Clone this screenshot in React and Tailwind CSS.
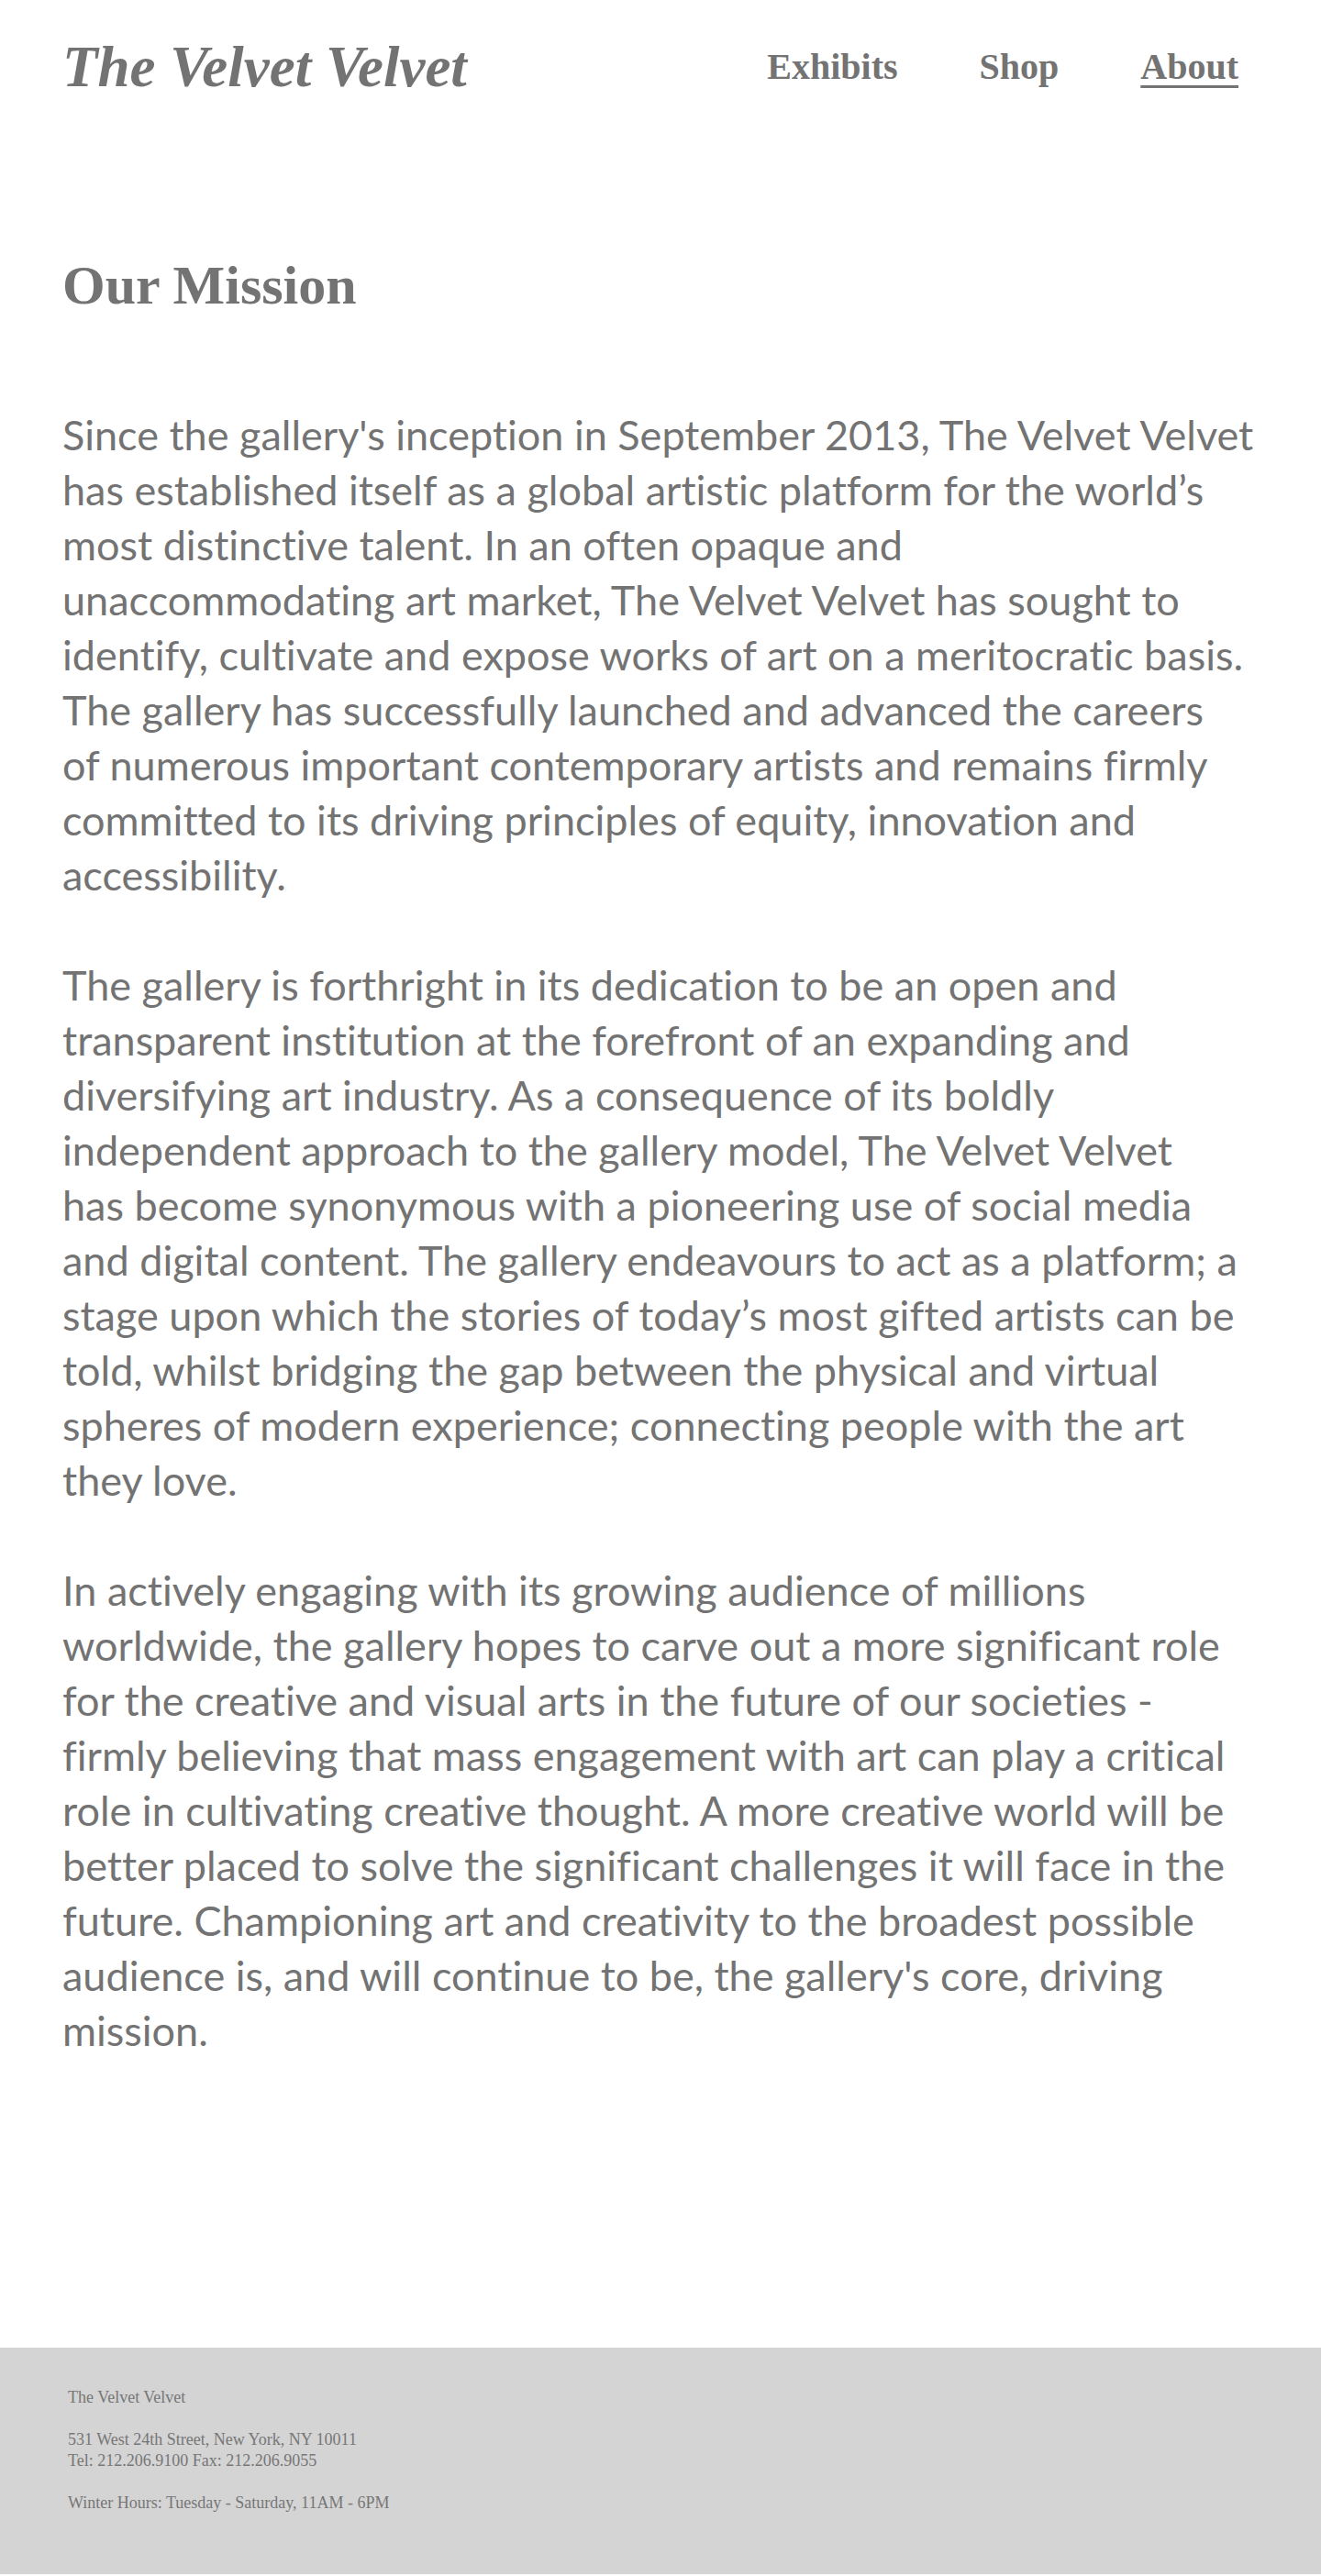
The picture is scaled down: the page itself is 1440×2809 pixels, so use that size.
import React from "react";

const paragraphs = [
  [
    "Since the gallery's inception in September 2013, The Velvet Velvet",
    "has established itself as a global artistic platform for the world’s",
    "most distinctive talent. In an often opaque and",
    "unaccommodating art market, The Velvet Velvet has sought to",
    "identify, cultivate and expose works of art on a meritocratic basis.",
    "The gallery has successfully launched and advanced the careers",
    "of numerous important contemporary artists and remains firmly",
    "committed to its driving principles of equity, innovation and",
    "accessibility.",
  ],
  [
    "The gallery is forthright in its dedication to be an open and",
    "transparent institution at the forefront of an expanding and",
    "diversifying art industry. As a consequence of its boldly",
    "independent approach to the gallery model, The Velvet Velvet",
    "has become synonymous with a pioneering use of social media",
    "and digital content. The gallery endeavours to act as a platform; a",
    "stage upon which the stories of today’s most gifted artists can be",
    "told, whilst bridging the gap between the physical and virtual",
    "spheres of modern experience; connecting people with the art",
    "they love.",
  ],
  [
    "In actively engaging with its growing audience of millions",
    "worldwide, the gallery hopes to carve out a more significant role",
    "for the creative and visual arts in the future of our societies -",
    "firmly believing that mass engagement with art can play a critical",
    "role in cultivating creative thought. A more creative world will be",
    "better placed to solve the significant challenges it will face in the",
    "future. Championing art and creativity to the broadest possible",
    "audience is, and will continue to be, the gallery's core, driving",
    "mission.",
  ],
];

const navLinks = ["Exhibits", "Shop", "About"];

const App = () => {
  return (
    <div className="min-h-screen bg-white text-[#737373]">
      {/* Header */}
      <header className="flex h-[146px] items-center justify-between px-[68px] font-['Liberation_Serif',serif]">
        <a href="#" className="text-[63px] font-bold italic leading-none">
          The Velvet Velvet
        </a>
        <nav className="flex gap-[89px] pr-[22px]">
          {navLinks.map((link) => (
            <a
              key={link}
              href="#"
              className={
                link === "About"
                  ? "text-[40px] font-bold leading-none underline decoration-[3px] underline-offset-[7px]"
                  : "text-[40px] font-bold leading-none"
              }
            >
              {link}
            </a>
          ))}
        </nav>
      </header>

      {/* Mission */}
      <main className="px-[68px] pb-[316px]">
        <h1 className="mt-[135px] font-['Liberation_Serif',serif] text-[60px] font-bold leading-[60px]">
          Our Mission
        </h1>
        <div className="mt-[103px] font-['Lato',sans-serif] text-[45px] leading-[60px] text-[#737373] [font-variant-ligatures:none]">
          {paragraphs.map((lines, i) => (
            <p key={i} className="mb-[60px] last:mb-0">
              {lines.map((line) => (
                <span key={line} className="block whitespace-nowrap">
                  {line}
                </span>
              ))}
            </p>
          ))}
        </div>
      </main>

      {/* Footer */}
      <footer className="bg-[#d4d4d4] px-[74px] pt-[43px] pb-[66px] font-['Liberation_Serif',serif] text-[18px] leading-[23px] text-[#777777]">
        <p>The Velvet Velvet</p>
        <br />
        <p>531 West 24th Street, New York, NY 10011</p>
        <p>Tel: 212.206.9100 Fax: 212.206.9055</p>
        <br />
        <p>Winter Hours: Tuesday - Saturday, 11AM - 6PM</p>
      </footer>
    </div>
  );
};

export default App;
